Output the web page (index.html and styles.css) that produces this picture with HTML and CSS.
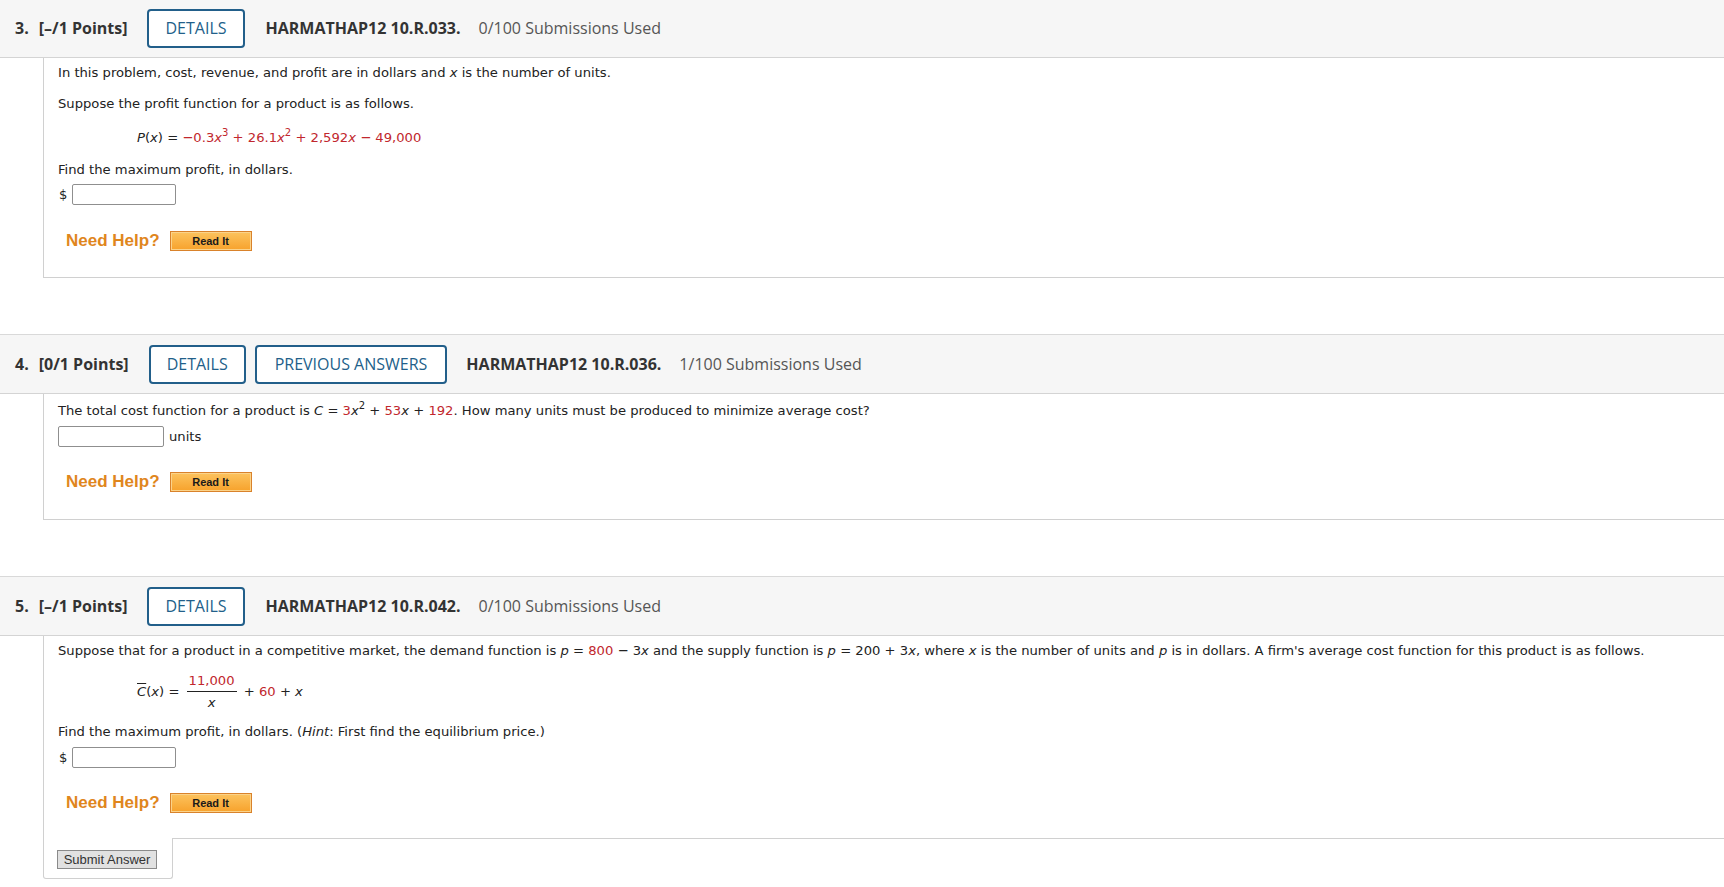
FILE: index.html
```html
<!DOCTYPE html>
<html>
<head>
<meta charset="utf-8">
<link rel="stylesheet" href="styles.css">
</head>
<body>
<div class="page">

  <section class="q">
    <div class="qhead">
      <span class="qnum">3.</span><span class="pts">[–/1 Points]</span>
      <span class="btn">DETAILS</span>
      <span class="code">HARMATHAP12 10.R.033.</span>
      <span class="subs">0/100 Submissions Used</span>
    </div>
    <div class="qbody b3">
      <p class="line">In this problem, cost, revenue, and profit are in dollars and <i>x</i> is the number of units.</p>
      <p class="line l2">Suppose the profit function for a product is as follows.</p>
      <p class="line eq e3"><i>P</i>(<i>x</i>) = <span class="red">−0.3<i>x</i><sup>3</sup> + 26.1<i>x</i><sup>2</sup> + 2,592<i>x</i> − 49,000</span></p>
      <p class="line f3">Find the maximum profit, in dollars.</p>
      <div class="ans a3"><span class="dollar">$</span><span class="input"></span></div>
      <div class="help h3"><span class="need">Need Help?</span><span class="readit">Read It</span></div>
    </div>
  </section>

  <section class="q">
    <div class="qhead">
      <span class="qnum">4.</span><span class="pts">[0/1 Points]</span>
      <span class="btn">DETAILS</span>
      <span class="btn">PREVIOUS ANSWERS</span>
      <span class="code c4">HARMATHAP12 10.R.036.</span>
      <span class="subs">1/100 Submissions Used</span>
    </div>
    <div class="qbody b4">
      <p class="line">The total cost function for a product is <i>C</i> = <span class="red">3</span><i>x</i><sup>2</sup> + <span class="red">53</span><i>x</i> + <span class="red">192</span>. How many units must be produced to minimize average cost?</p>
      <div class="ans a4"><span class="input wide"></span><span class="unit">units</span></div>
      <div class="help h4"><span class="need">Need Help?</span><span class="readit">Read It</span></div>
    </div>
  </section>

  <section class="q">
    <div class="qhead">
      <span class="qnum">5.</span><span class="pts">[–/1 Points]</span>
      <span class="btn">DETAILS</span>
      <span class="code">HARMATHAP12 10.R.042.</span>
      <span class="subs">0/100 Submissions Used</span>
    </div>
    <div class="qbody b5">
      <p class="line">Suppose that for a product in a competitive market, the demand function is <i>p</i> = <span class="red">800</span> − 3<i>x</i> and the supply function is <i>p</i> = 200 + 3<i>x</i>, where <i>x</i> is the number of units and <i>p</i> is in dollars. A firm's average cost function for this product is as follows.</p>
      <div class="eq e5"><span class="cbar"><i>C</i></span>(<i>x</i>) = <span class="frac"><span class="num red">11,000</span><span class="den"><i>x</i></span></span> + <span class="red">60</span> + <i>x</i></div>
      <p class="line f5">Find the maximum profit, in dollars. (<i>Hint</i>: First find the equilibrium price.)</p>
      <div class="ans a5"><span class="dollar">$</span><span class="input"></span></div>
      <div class="help h5"><span class="need">Need Help?</span><span class="readit">Read It</span></div>
    </div>
    <div class="submit-tab"><span class="submit">Submit Answer</span></div>
  </section>

</div>
</body>
</html>
```
FILE: styles.css
```css
body {
  margin: 0;
  background: #fff;
  font-family: "DejaVu Sans", Verdana, sans-serif;
  font-size: 13.15px;
  color: #222;
}
.page { margin-top: -2px; }
.q + .q { margin-top: 56px; }

.qhead {
  display: flex;
  align-items: center;
  height: 58px;
  background: #f6f6f6;
  border-top: 1px solid #d9d9d9;
  border-bottom: 1px solid #d4d4d4;
  padding-left: 15px;
  font-family: "Open Sans", sans-serif;
  font-size: 16px;
  color: #333;
}
.qnum { font-weight: 700; margin-right: 10px; }
.pts { font-weight: 700; }
.btn {
  box-sizing: border-box;
  height: 39px;
  display: flex;
  align-items: center;
  border: 2px solid #225f8a;
  border-radius: 4px;
  background: #fff;
  color: #225f8a;
  padding: 0 16px;
  margin-left: 20px;
}
.btn + .btn { margin-left: 9px; padding: 0 18px; }
.code { font-weight: 700; margin-left: 21px; color: #333; }
.code.c4 { margin-left: 19px; }
.subs { margin-left: 18px; color: #555; }

.qbody {
  margin-left: 43px;
  border-left: 1px solid #d0d0d0;
  border-bottom: 1px solid #d0d0d0;
  padding: 6px 0 26px 14px;
}
.b4 { padding-top: 8px; padding-bottom: 27px; }
.b5 { padding-bottom: 25px; }
.line { margin: 0; line-height: 18px; }
.l2 { margin-top: 13px; }
.eq { padding-left: 79px; line-height: 18px; }
.e3 { margin-top: 16px; }
.f3 { margin-top: 14px; }
sup { font-size: 10px; line-height: 0; vertical-align: 6px; }
.red { color: #c1272d; }

.ans { display: flex; align-items: center; height: 20px; }
.a3 { margin-top: 5px; }
.a4 { margin-top: 6px; }
.a5 { margin-top: 6px; }
.dollar { margin-left: 1px; margin-right: 5px; }
.input {
  box-sizing: border-box;
  width: 104px;
  height: 21px;
  border: 1px solid #8f8f8f;
  border-radius: 2px;
  background: #fff;
}
.input.wide { width: 106px; }
.unit { margin-left: 5px; }

.help { display: flex; align-items: center; height: 20px; margin-top: 27px; }
.h4 { margin-top: 26px; }
.h5 { margin-top: 26px; }
.need {
  font-family: "Liberation Sans", Arial, sans-serif;
  font-weight: 700;
  font-size: 17px;
  color: #e0861d;
  margin-left: 8px;
  margin-right: 10px;
}
.readit {
  box-sizing: border-box;
  width: 82px;
  height: 20px;
  display: flex;
  align-items: center;
  justify-content: center;
  border: 1px solid #d9822b;
  box-shadow: inset 0 0 0 1px #fbd38a;
  background: linear-gradient(#fcc35e, #f7a22c);
  font-family: "Liberation Sans", Arial, sans-serif;
  font-weight: 700;
  font-size: 11px;
  color: #1a1a1a;
}

.e5 { margin-top: 13px; height: 38px; line-height: 38px; white-space: nowrap; }
.cbar { text-decoration: overline; }
.frac {
  display: inline-flex;
  flex-direction: column;
  align-items: center;
  vertical-align: middle;
  margin: 0 3px 0 3px;
  line-height: 16px;
  position: relative;
  top: -1px;
}
.num { line-height: 16px; padding: 0 2px 2px; border-bottom: 1px solid #222; }
.den { line-height: 16px; padding-top: 3px; }
.f5 { margin-top: 12px; }

.submit-tab {
  box-sizing: border-box;
  width: 130px;
  margin-left: 43px;
  margin-top: -1px;
  background: #fff;
  border: 1px solid #d0d0d0;
  border-top: none;
  border-radius: 0 0 3px 3px;
  padding: 12px 0 9px 13px;
}
.submit {
  box-sizing: border-box;
  display: inline-flex;
  align-items: center;
  justify-content: center;
  width: 100px;
  height: 19px;
  background: #e1e1e1;
  border: 1px solid #8a8a8a;
  font-family: "Liberation Sans", Arial, sans-serif;
  font-size: 13px;
  color: #333;
}
```
